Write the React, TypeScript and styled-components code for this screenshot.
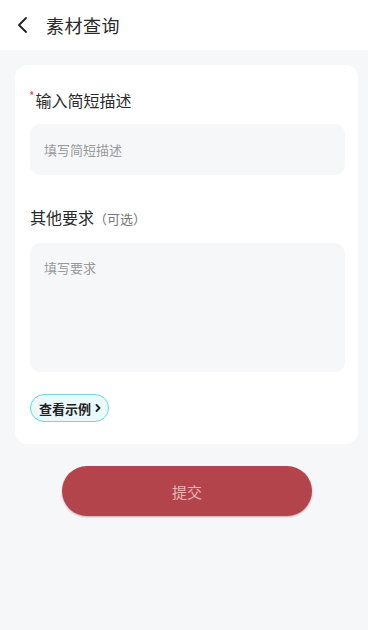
import React from 'react';
import styled, { createGlobalStyle } from 'styled-components';

const GlobalStyle = createGlobalStyle`
    html, body {
        margin: 0;
        padding: 0;
        background: #f6f7f9;
    }
    * {
        box-sizing: border-box;
    }
    body {
        font-family: "Noto Sans CJK SC", "Noto Sans", sans-serif;
    }
`

const App = () => {
    return (
        <>
            <GlobalStyle />
            <Page>
                <Header>
                    <BackButton>
                        <svg width="14" height="18" viewBox="0 0 14 18" fill="none">
                            <path d="M10 2L3 9L10 16" stroke="#222" strokeWidth="1.8" strokeLinecap="round" strokeLinejoin="round" />
                        </svg>
                    </BackButton>
                    <Title>素材查询</Title>
                </Header>

                <Body>
                    <Card>
                        <Field>
                            <Label><Star>*</Star>输入简短描述</Label>
                            <Input placeholder="填写简短描述" />
                        </Field>

                        <Field>
                            <Label $plain>其他要求<Optional>（可选）</Optional></Label>
                            <TextArea placeholder="填写要求" />
                        </Field>

                        <ExampleButton>
                            查看示例
                            <svg width="6" height="8" viewBox="0 0 6 8" fill="none">
                                <path d="M1.5 1L4.5 4L1.5 7" stroke="#222" strokeWidth="1.8" strokeLinecap="round" strokeLinejoin="round" />
                            </svg>
                        </ExampleButton>
                    </Card>

                    <SubmitButton>提交</SubmitButton>
                </Body>
            </Page>
        </>
    )
}

export default App

const Page = styled.div`
    width: 100%;
    min-height: 630px;
    background: #f6f7f9;
    display: flex;
    flex-direction: column;
`

const Header = styled.div`
    height: 50px;
    background: #fff;
    display: flex;
    align-items: center;
    padding: 0 0 0 14px;
`

const BackButton = styled.div`
    width: 18px;
    height: 18px;
    display: flex;
    align-items: center;
    justify-content: center;
    margin-right: 14px;
`

const Title = styled.div`
    font-size: 18px;
    font-weight: 400;
    color: #2a2a2a;
    letter-spacing: 0.5px;
`

const Body = styled.div`
    padding: 15px 10px 0 15px;
    display: flex;
    flex-direction: column;
`

const Card = styled.div`
    background: #fff;
    border-radius: 12px;
    padding: 23px 13px 22px 15px;
    display: flex;
    flex-direction: column;
    align-items: flex-start;
`

const Field = styled.div`
    width: 100%;
    display: flex;
    flex-direction: column;
    margin-bottom: 30px;

    &:nth-of-type(2) {
        margin-bottom: 22px;
    }
`

const Label = styled.div<{ $plain?: boolean }>`
    font-size: 16px;
    font-weight: 400;
    color: #2a2a2a;
    line-height: 24px;
    margin-bottom: 12px;
    margin-left: ${p => p.$plain ? '0' : '-1px'};
`

const Star = styled.span`
    color: #e2475a;
    font-size: 12px;
    vertical-align: top;
    line-height: 16px;
    margin-right: 1px;
`

const Optional = styled.span`
    font-size: 13px;
    font-weight: 400;
    color: #777;
`

const Input = styled.input`
    width: 100%;
    height: 51px;
    border: none;
    outline: none;
    background: #f6f7f9;
    border-radius: 10px;
    padding: 0 14px;
    font-family: inherit;
    font-size: 13px;
    color: #333;

    &::placeholder {
        color: #999;
    }
`

const TextArea = styled.textarea`
    width: 100%;
    height: 129px;
    border: none;
    outline: none;
    resize: none;
    background: #f6f7f9;
    border-radius: 10px;
    padding: 15px 14px;
    font-family: inherit;
    font-size: 13px;
    line-height: 20px;
    color: #333;

    &::placeholder {
        color: #999;
    }
`

const ExampleButton = styled.div`
    display: inline-flex;
    align-items: center;
    gap: 4px;
    height: 28px;
    padding: 0 7px 0 8px;
    border: 1.5px solid #6fd6da;
    background: #eafafb;
    border-radius: 14px;
    font-size: 13px;
    font-weight: 700;
    color: #222;
`

const SubmitButton = styled.div`
    align-self: center;
    margin: 22px 0 0 1px;
    width: 250px;
    height: 50px;
    border-radius: 25px;
    background: #b4444c;
    box-shadow: 0 1px 2px rgba(120, 20, 30, 0.35);
    display: flex;
    align-items: center;
    justify-content: center;
    font-size: 15px;
    color: #e9b4b8;
`
